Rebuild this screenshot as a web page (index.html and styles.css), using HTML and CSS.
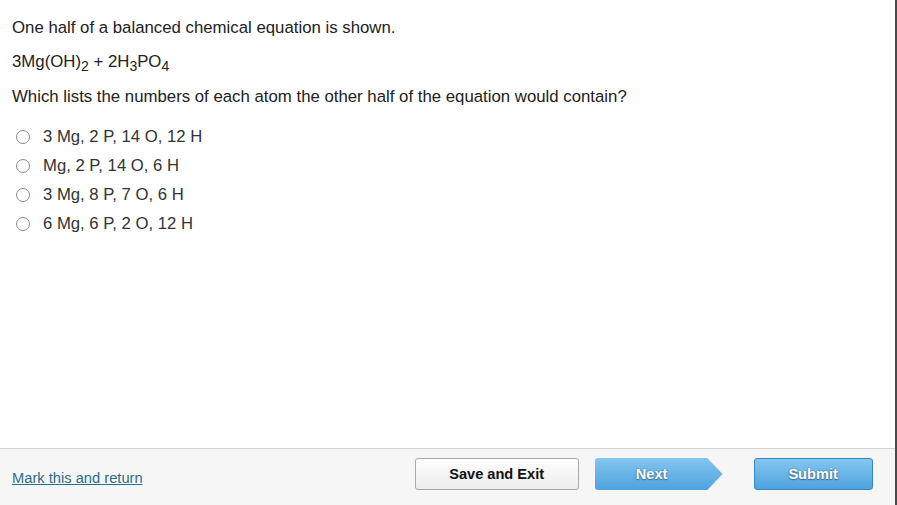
FILE: index.html
```html
<!DOCTYPE html>
<html>
<head>
<meta charset="utf-8">
<link rel="stylesheet" href="styles.css">
</head>
<body>
<div class="page">
  <main class="content">
    <p class="line first">One half of a balanced chemical equation is shown.</p>
    <p class="line eq">3Mg(OH)<sub>2</sub> + 2H<sub>3</sub>PO<sub>4</sub></p>
    <p class="line">Which lists the numbers of each atom the other half of the equation would contain?</p>
    <ul class="options">
      <li class="option"><span class="radio"></span><span>3 Mg, 2 P, 14 O, 12 H</span></li>
      <li class="option"><span class="radio"></span><span>Mg, 2 P, 14 O, 6 H</span></li>
      <li class="option"><span class="radio"></span><span>3 Mg, 8 P, 7 O, 6 H</span></li>
      <li class="option"><span class="radio"></span><span>6 Mg, 6 P, 2 O, 12 H</span></li>
    </ul>
  </main>
  <footer class="footer">
    <a class="mark" href="#">Mark this and return</a>
    <div class="buttons">
      <button class="btn save">Save and Exit</button>
      <button class="btn blue next">Next</button>
      <button class="btn blue submit">Submit</button>
    </div>
  </footer>
</div>
</body>
</html>
```
FILE: styles.css
```css
html, body {
  margin: 0;
  padding: 0;
  background: #ffffff;
}
body {
  font-family: Arial, "Liberation Sans", sans-serif;
  color: #222;
}
.page {
  width: 895px;
  height: 505px;
  border-right: 2px solid #4a4a4a;
  display: flex;
  flex-direction: column;
  overflow: hidden;
}
.content {
  flex: 1;
  padding: 18px 0 0 12px;
}
.line {
  margin: 0 0 15px 0;
  font-size: 16.8px;
  line-height: 20px;
}
.first {
  margin-bottom: 14px;
}
.eq sub {
  font-size: 14px;
  vertical-align: -4px;
  line-height: 0;
}
.options {
  list-style: none;
  margin: 0;
  padding: 0;
  margin-top: 14px;
}
.option {
  display: flex;
  align-items: center;
  height: 29px;
  font-size: 16.7px;
  color: #333;
}
.radio {
  box-sizing: border-box;
  width: 14px;
  height: 14px;
  border: 1px solid #8d8d8d;
  border-radius: 50%;
  margin-left: 4px;
  margin-right: 13px;
  background: #fff;
}
.footer {
  height: 56px;
  border-top: 1px solid #d3d3d3;
  background: #f6f6f6;
  display: flex;
  align-items: center;
  padding-left: 12px;
}
.mark {
  color: #2b6e87;
  font-size: 14.7px;
  margin-top: 2px;
  text-decoration: underline;
}
.buttons {
  display: flex;
  margin-left: 272px;
  margin-bottom: 6px;
  gap: 16px;
}
.btn {
  box-sizing: border-box;
  height: 32px;
  font-family: Arial, "Liberation Sans", sans-serif;
  font-weight: bold;
  font-size: 14.6px;
  border-radius: 3px;
  padding: 0;
}
.save {
  width: 164px;
  color: #111;
  background: linear-gradient(#ffffff, #ececec);
  border: 1px solid #a8a8a8;
}
.blue {
  color: #fff;
  text-shadow: 0 0 2px #3b6d8f, 0 1px 1px #3b6d8f;
  background: linear-gradient(#84c6f0, #4ea3de);
  border: 1px solid #3a86bf;
}
.next {
  width: 128px;
  border: none;
  border-radius: 3px 0 0 3px;
  clip-path: polygon(0 0, 88% 0, 100% 50%, 88% 100%, 0 100%);
  background: linear-gradient(#84c6f0, #4ea3de);
  padding-right: 14px;
}
.submit {
  width: 119px;
  margin-left: 15px;
}
```
